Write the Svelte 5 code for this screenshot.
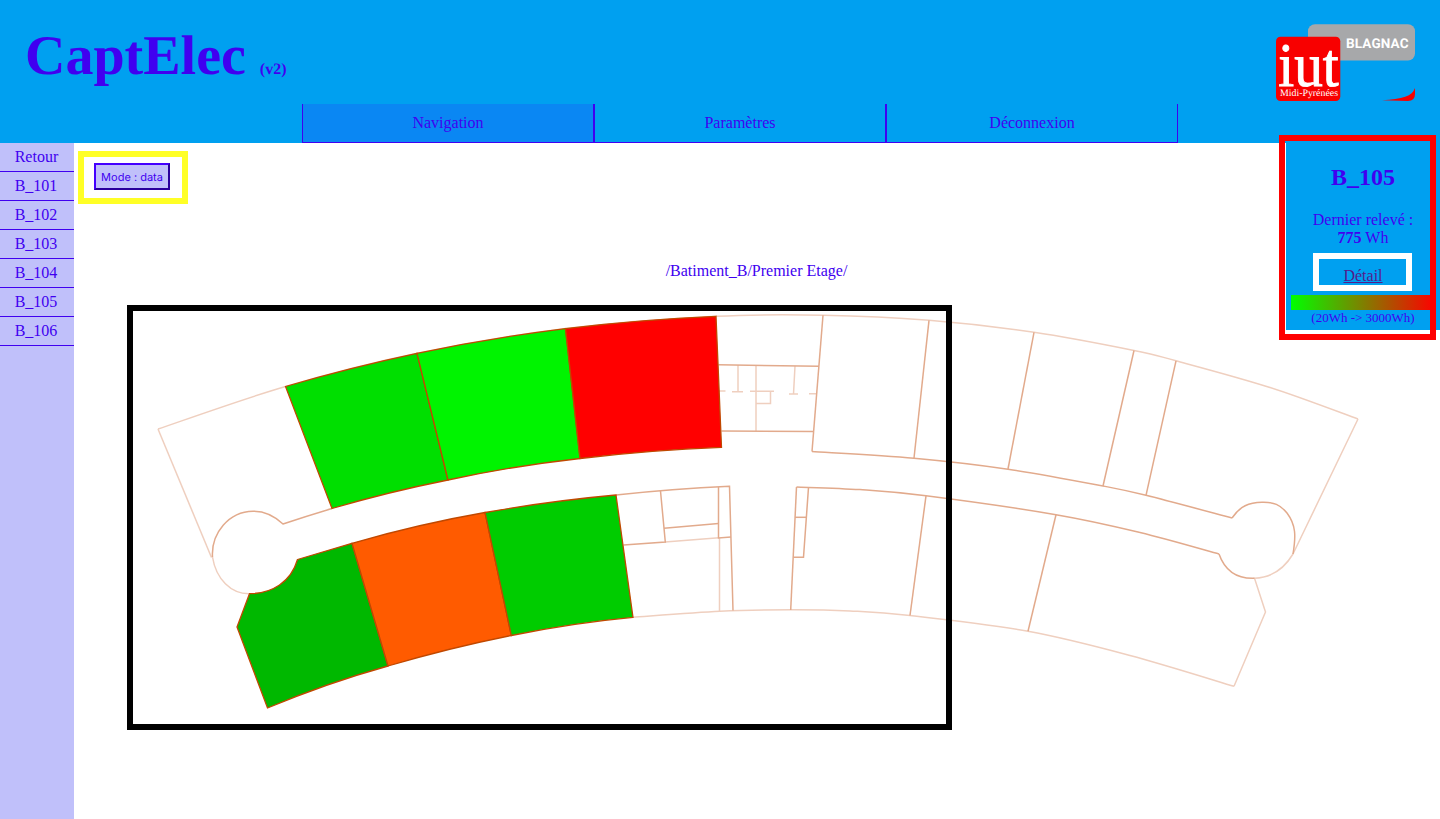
<script>
  const tabs = ['Navigation', 'Paramètres', 'Déconnexion'];
  const rooms = ['Retour', 'B_101', 'B_102', 'B_103', 'B_104', 'B_105', 'B_106'];

  // Smooth curve segments through the points, starting from the first one
  function curve(p) {
    let d = '';
    for (let i = 0; i < p.length - 1; i++) {
      const a = p[i - 1] ?? p[i], b = p[i], c = p[i + 1], e = p[i + 2] ?? c;
      d += `C${b[0] + (c[0] - a[0]) / 6} ${b[1] + (c[1] - a[1]) / 6} ${c[0] - (e[0] - b[0]) / 6} ${c[1] - (e[1] - b[1]) / 6} ${c[0]} ${c[1]}`;
    }
    return d;
  }
  const line = (p) => `M${p[0][0]} ${p[0][1]}` + curve(p);

  const outerTop = [[158, 429], [285.5, 386.5], [417, 353.3], [565.5, 328.6], [716, 316.3], [823, 315.2], [929, 320.3], [1034, 332.3], [1134, 350.5], [1176, 360.8], [1270, 387.5], [1358, 419]];
  const hallTopRight = [[812, 451.5], [914, 458.2], [1008, 469.2], [1103, 486], [1146, 495.3], [1232, 518]];
  const hallLowRight = [[796.5, 487], [860, 489.6], [926, 495.8], [1056, 514.7], [1140, 532.5], [1219, 554]];
  const outerLow = [[633, 617.3], [720, 611.3], [791, 609.8], [850, 611], [910, 615.5], [1028, 631.3], [1130, 655.5], [1234, 686.3]];

  const areas = [
    { fill: '#00df00', d: 'M285.5 386.5Q350 367.5 417 353.3L448 480Q388 492 332 508.5Z' },
    { fill: '#00f400', d: 'M417 353.3Q490 338 565.5 328.6L580 458.5Q513 466 448 480Z' },
    { fill: '#ff0000', d: 'M565.5 328.6Q640 319.5 716 316.3L721.5 447.3Q650 450 580 458.5Z' },
    { fill: '#00b800', d: 'M297.5 559.5L352 543.3L388 666Q327 683 267.5 708L237 627L249.5 593.7C272 593.5 291 582 297.5 559.5Z' },
    { fill: '#ff5b00', d: 'M352 543.3Q419 524 485 512.5L511.3 635.5Q449 648 388 666Z' },
    { fill: '#00cc00', d: 'M485 512.5Q550 501 616 495L633 617.3Q572 623 511.3 635.5Z' },
  ];
  const faint = [
    line(outerTop), line(outerLow),
    'M158 429L211.5 557.5', 'M212.5 557C216 579 231 594 249.5 593.7',
    'M1358 419L1293 554C1284 569 1272 577.5 1254.5 578.3L1265.5 612L1234 686.3',
    'M719.5 538V611', 'M665 542L719 537.7',
    'M738 365V392M732 391.8H743M756 365V431M750 391.3H774M756 403.5H770.5V391.5M795 366L793.5 394M789 394H798M809 393.7H817M719 391H725.5',
  ];
  const strong = [
    line(hallTopRight), line(hallLowRight),
    'M212.5 557C211 533 229 511.5 253 511.2C265 511 274 515.5 283 524Q307 516 332 508.5',
    'M616 495Q672 489 729.5 486.3L733 610.5', 'M660.5 491L665.3 542L623.5 545',
    'M664 528.3L718.5 523.5', 'M718.5 487V538L731 537',
    'M718.5 364.8L819 366.3', 'M721.5 431L814 431.5',
    'M823 315.2L812 451.5', 'M929 320.3L914 458', 'M1034 332.3L1008 469', 'M1134 350.5L1103 486', 'M1176 360.8L1146 495.3',
    'M796.5 487L790.7 610', 'M808.5 487.5L803.5 557.3H793.3', 'M795 517.3H806.5',
    'M926 495.8L910 615.5', 'M1056 514.7L1028 631.3',
    'M1232 518C1240 506 1249 502.5 1262 502.3C1274 502 1280 504.5 1287 513C1296 525 1296 536 1293 554',
    'M1219 554C1225 571 1236 579 1254.5 578.3',
  ];
</script>

<div class="page">
  <header>
    <div class="banner">
      <h1>CaptElec <small>(v2)</small></h1>
      <svg class="logo" width="140" height="78" viewBox="0 0 140 78">
        <rect x="32" y="0.3" width="107" height="36.2" rx="7" fill="#a7a8aa" />
        <rect x="0" y="12.7" width="64.3" height="64.3" rx="4.5" fill="#f80000" />
        <text class="campus" x="70" y="23.8" textLength="62.5">BLAGNAC</text>
        <text class="iut" x="2.3" y="62" textLength="60.5" lengthAdjust="spacingAndGlyphs">iut</text>
        <text class="region" x="4" y="72.3" textLength="58" lengthAdjust="spacingAndGlyphs">Midi-Pyrénées</text>
        <path d="M106 76.3C126 75.2 137 72 138.6 64.5H139V70Q139 77 132 77Z" fill="#f80000" />
      </svg>
    </div>
    <nav>
      {#each tabs as tab, i}
        <a class:active={i === 0}>{tab}</a>
      {/each}
    </nav>
  </header>

  <div class="body">
    <aside>
      {#each rooms as room}
        <a>{room}</a>
      {/each}
    </aside>
    <main>
      <button>Mode : data</button>
      <p class="path">/Batiment_B/Premier Etage/</p>
    </main>
    <section class="panel">
      <h2>B_105</h2>
      <p>Dernier relevé :<br /><b>775</b> Wh</p>
      <a class="detail">Détail</a>
      <div class="scale"></div>
      <div class="range">(20Wh -&gt; 3000Wh)</div>
    </section>
  </div>

  <svg class="plan" width="1440" height="819" viewBox="0 0 1440 819">
    <g class="faint">{#each faint as d}<path {d} />{/each}</g>
    <g class="strong">{#each strong as d}<path {d} />{/each}</g>
    <g class="rooms">{#each areas as a}<path d={a.d} fill={a.fill} />{/each}</g>
  </svg>

  <div class="frame plan-frame"></div>
  <div class="frame mode-frame"></div>
  <div class="frame panel-frame"></div>
  <div class="frame detail-frame"></div>
</div>

<style>
  .page {
    height: 819px;
    position: relative;
    display: flex;
    flex-direction: column;
    overflow: hidden;
    background: #fff;
    color: #4000f0;
    font: 16px/18px "Liberation Serif", serif;
  }
  header { height: 143px; background: #00a0f0; }
  .banner { height: 104px; display: flex; justify-content: space-between; padding: 0 24px 0 25px; box-sizing: border-box; }
  h1 { margin: 24px 0 0; font-size: 56px; line-height: 64px; height: 64px; white-space: nowrap; text-rendering: geometricPrecision; }
  small { font-size: 16px; }
  .logo { margin-top: 24px; text-rendering: geometricPrecision; }
  .campus { font: bold 13.5px Roboto, sans-serif; fill: #fff; }
  .iut { font: 62px "Liberation Serif", serif; fill: #fff; stroke: #fff; stroke-width: 0.9; }
  .region { font: 10px "Liberation Serif", serif; fill: #fff; }
  nav { display: flex; width: 876px; margin-left: 302px; }
  nav a { flex: 1; height: 39px; box-sizing: border-box; border: solid #4000f0; border-width: 0 1px 1px; text-align: center; line-height: 37px; }
  nav a.active { background: #0a87f3; }
  .body { flex: 1; display: flex; align-items: stretch; }
  aside { width: 74px; background: #c0c0fa; }
  aside a { display: block; height: 29px; box-sizing: border-box; padding-left: 14.7px; border-bottom: 1px solid #4000f0; line-height: 28px; }
  main { flex: 1; }
  button {
    display: block;
    width: 76px;
    height: 27px;
    margin: 20px 0 0 20px;
    padding: 0;
    border: 2px outset #4000f0;
    background: #c0c0fa;
    color: #4000f0;
    font: 11px Inter, sans-serif;
    letter-spacing: 0;
    text-rendering: geometricPrecision;
    white-space: nowrap;
  }
  .path { margin: 72px 0 0; padding-left: 153px; text-align: center; }
  .panel { width: 154px; height: 187px; box-sizing: border-box; padding: 0 5px; background: #00a0f0; text-align: center; }
  h2 { margin: 20px 0 0; font-size: 24px; line-height: 28px; }
  .panel p { margin: 20px 0; }
  .detail { display: block; color: #551a8b; text-decoration: underline; line-height: 18px; }
  .scale { height: 15px; margin-top: 10px; background: linear-gradient(90deg, #0f0, #f00); }
  .range { font-size: 13px; line-height: 16px; }
  .plan { position: absolute; inset: 0; }
  .plan path { stroke: #c04800; stroke-width: 1.3; }
  .plan .faint path { fill: none; stroke: #efcfbf; stroke-width: 1.5; }
  .plan .strong path { fill: none; stroke: #e2aa8c; stroke-width: 1.5; }
  .frame { position: absolute; box-sizing: border-box; border: 6px solid; }
  .plan-frame { left: 127px; top: 305px; width: 825px; height: 425px; color: #000; }
  .mode-frame { left: 78px; top: 151px; width: 110px; height: 53px; color: #ffff26; }
  .panel-frame { left: 1279px; top: 135px; width: 157px; height: 205px; color: #f00; }
  .detail-frame { left: 1313px; top: 253px; width: 99px; height: 38px; color: #fff; }
</style>
